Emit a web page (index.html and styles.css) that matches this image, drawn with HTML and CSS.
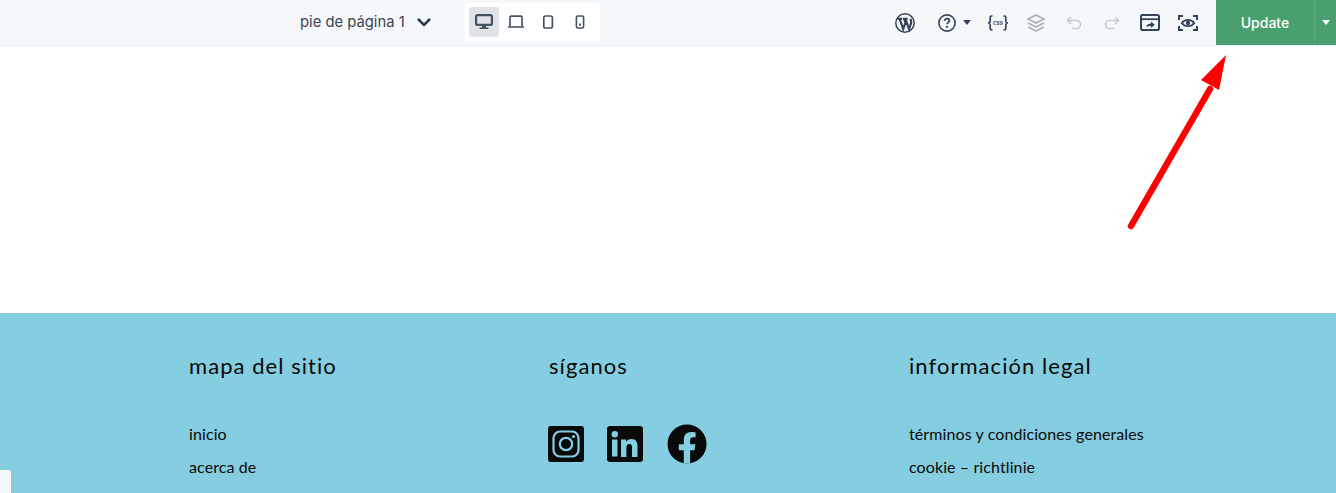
FILE: index.html
```html
<!DOCTYPE html>
<html lang="en">
<head>
    <meta charset="UTF-8">
    <meta name="viewport" content="width=device-width, initial-scale=1.0">
    <title>pie de página 1</title>
    <link rel="stylesheet" href="styles.css">
</head>
<body>

    <header class="topBar">
        <div class="pageName">
            <span>pie de página 1</span>
            <svg class="chevron" width="16" height="10" viewBox="0 0 16 10"><path d="M2 2 8 8l6-6" fill="none" stroke="#2f3d4d" stroke-width="2.600"/></svg>
        </div>

        <div class="devices">
            <button class="iconBtn device active">
                <svg width="18" height="16" viewBox="0 0 18 16"><rect x="1.100" y="1.100" width="15.800" height="9.800" rx="1.500" fill="none" stroke="#46535f" stroke-width="2.200"/><path d="M7 12h4v1.500h2.500V15h-9v-1.500H7z" fill="#46535f"/></svg>
            </button>
            <button class="iconBtn device">
                <svg width="18" height="14" viewBox="0 0 18 14"><path d="M3 11V2.200a1 1 0 0 1 1-1h10a1 1 0 0 1 1 1V11" fill="none" stroke="#46535f" stroke-width="1.700"/><path d="M1 11.200h16v1.600H1z" fill="#46535f"/></svg>
            </button>
            <button class="iconBtn device">
                <svg width="12" height="14" viewBox="0 0 12 14"><rect x="1.800" y="1" width="8.600" height="12" rx="1.800" fill="none" stroke="#46535f" stroke-width="1.700"/></svg>
            </button>
            <button class="iconBtn device">
                <svg width="10" height="14" viewBox="0 0 10 14"><rect x="1.400" y="1" width="7.200" height="12" rx="1.600" fill="none" stroke="#46535f" stroke-width="1.600"/><rect x="4" y="8.600" width="2" height="2" fill="#46535f"/></svg>
            </button>
        </div>

        <div class="tools">
            <button class="iconBtn">
                <svg width="20" height="20" viewBox="0 0 20 20"><circle cx="10" cy="10" r="9.200" fill="none" stroke="#33445a" stroke-width="1.500"/><path d="M2.800 5.800h4.400M4.700 6l3.500 10 2.300-6.300-1.300-3.700M8 5.800h4.600M10.500 6l3.500 10 2-5.700c.6-1.700.2-3-.7-4.300" fill="none" stroke="#33445a" stroke-width="2.200"/></svg>
            </button>
            <button class="iconBtn helpBtn">
                <svg width="18" height="18" viewBox="0 0 18 18"><circle cx="9" cy="9" r="8.100" fill="none" stroke="#33445a" stroke-width="1.600"/><path d="M6.600 7c0-1.500 1.100-2.300 2.400-2.300S11.400 5.500 11.400 6.800c0 1.700-2.400 1.800-2.400 3.500" fill="none" stroke="#33445a" stroke-width="1.700"/><circle cx="9" cy="12.900" r="1.100" fill="#33445a"/></svg>
                <span class="caret dark"></span>
            </button>
            <button class="iconBtn">
                <svg width="20" height="16" viewBox="0 0 20 16"><path d="M4.500 1H3.600C2.600 1 2.200 1.600 2.200 2.500v3.400C2.200 7 1.700 7.600.8 8c.9.400 1.400 1 1.400 2.100v3.400c0 .9.400 1.500 1.400 1.500h.9M15.500 1h.9c1 0 1.400.6 1.400 1.500v3.400c0 1.100.5 1.700 1.400 2.100-.9.400-1.400 1-1.400 2.100v3.400c0 .9-.4 1.500-1.400 1.500h-.9" fill="none" stroke="#33445a" stroke-width="1.700"/><text class="cssLabel" x="10" y="10">css</text></svg>
            </button>
            <button class="iconBtn">
                <svg width="18" height="18" viewBox="0 0 18 18" fill="none" stroke="#a9b2ba" stroke-width="1.600"><path d="M9 1 17 5 9 9 1 5z"/><path d="M1 9l8 4 8-4"/><path d="M1 13l8 4 8-4"/></svg>
            </button>
            <button class="iconBtn">
                <svg width="16" height="14" viewBox="0 0 16 14" fill="none" stroke="#c5cbd0" stroke-width="1.600"><path d="M5 1 1.500 4.500 5 8"/><path d="M2 4.500h8.500a4 4 0 0 1 0 8H6"/></svg>
            </button>
            <button class="iconBtn">
                <svg width="16" height="14" viewBox="0 0 16 14" fill="none" stroke="#c5cbd0" stroke-width="1.600"><path d="M11 1l3.500 3.500L11 8"/><path d="M14 4.500H5.500a4 4 0 0 0 0 8H10"/></svg>
            </button>
            <button class="iconBtn">
                <svg width="20" height="17" viewBox="0 0 20 17"><rect x="1" y="1" width="18" height="15" rx="1.800" fill="none" stroke="#33445a" stroke-width="2"/><path d="M1 5.200h18" stroke="#33445a" stroke-width="1.800"/><path d="M6.300 13.600c.1-2.600 1.800-4 4.700-4V7.600l3.800 3.200-3.800 3.100v-1.900c-2 0-3.400.4-4.700 1.600z" fill="#33445a"/></svg>
            </button>
            <button class="iconBtn">
                <svg width="20" height="16" viewBox="0 0 20 16" fill="none" stroke="#33445a" stroke-width="2"><path d="M1 5V1h4M15 1h4v4M19 11v4h-4M5 15H1v-4"/><path d="M3.800 8C6.500 3.800 13.500 3.800 16.200 8 13.500 12.200 6.500 12.200 3.800 8z" stroke-width="1.800"/><circle cx="10" cy="8" r="2.200" fill="#33445a" stroke="none"/></svg>
            </button>
        </div>

        <div class="updateBox">
            <button class="updateBtn">Update</button>
            <button class="updateMore"><span class="caret"></span></button>
        </div>
    </header>

    <main class="stage"></main>

    <footer class="siteFooter">
        <div class="footerCol">
            <h3>mapa del sitio</h3>
            <ul>
                <li>inicio</li>
                <li>acerca de</li>
            </ul>
        </div>
        <div class="footerCol">
            <h3>síganos</h3>
            <div class="socials">
                <svg width="36" height="36" viewBox="0 0 36 36"><rect width="36" height="36" rx="3" fill="#0a0a0a"/><rect x="5.500" y="5.500" width="25" height="25" rx="6.500" fill="none" stroke="#85cde0" stroke-width="2.200"/><circle cx="18" cy="18" r="6.200" fill="none" stroke="#85cde0" stroke-width="2.200"/><circle cx="25.500" cy="10.500" r="1.600" fill="#85cde0"/></svg>
                <svg width="36" height="36" viewBox="0 0 36 36"><rect width="36" height="36" rx="3" fill="#0a0a0a"/><rect x="5" y="13.500" width="5.500" height="17" fill="#85cde0"/><circle cx="7.800" cy="8.300" r="3.200" fill="#85cde0"/><path d="M14 13.500h5.200v2.400c1-1.800 2.900-2.800 5.200-2.800 5 0 6.100 3.200 6.100 7.500v10.400H25v-9.200c0-2.200-.4-3.900-2.600-3.900s-3 1.700-3 3.900v9.200H14z" fill="#85cde0"/></svg>
                <svg width="40" height="40" viewBox="0 0 40 40"><circle cx="20" cy="20" r="19.500" fill="#0a0a0a"/><path d="M16.800 39.500V26.200h-5v-6h5v-4.500c0-5 3-7.700 7.500-7.700 2.200 0 4.300.4 4.300.4v4.900h-2.400c-2.400 0-3.100 1.500-3.100 3v3.900h5.300l-.9 6h-4.400v13.300z" fill="#85cde0"/></svg>
            </div>
        </div>
        <div class="footerCol">
            <h3>información legal</h3>
            <ul>
                <li>términos y condiciones generales</li>
                <li>cookie – richtlinie</li>
            </ul>
        </div>
    </footer>

    <svg class="arrow" width="110" height="186" viewBox="0 0 110 186"><path d="M5 178 84 41" fill="none" stroke="#ff0000" stroke-width="6.500" stroke-linecap="round"/><path d="M100 7 93 42 75 32z" fill="#ff0000"/></svg>

    <div class="sideHandle"><span></span></div>

</body>
</html>
```

FILE: styles.css
```css
*{ box-sizing: border-box; }
html, body{ margin: 0; padding: 0; background-color: #fff; height: 493px; overflow: hidden; }
button{ border: 0; padding: 0; background: none; font: inherit; }

.topBar{
    display: flex;
    align-items: center;
    height: 46px;
    padding-left: 300px;
    background: #f5f8fa;
    border-bottom: 1px solid #e8ecef;
    font-family: "Inter", sans-serif;
}
.pageName{
    display: flex;
    align-items: center;
    width: 165px;
    gap: 11px;
    margin-top: -2px;
    font-size: 14.800px;
    color: #3a4654;
}

.devices{
    display: flex;
    gap: 2px;
    height: 38px;
    width: 135px;
    padding: 4px;
    margin-top: -1px;
    background: #fff;
    border-radius: 2px;
}
.iconBtn{
    display: flex;
    align-items: center;
    justify-content: center;
    width: 38px;
    height: 30px;
}
.iconBtn.device{ width: 30px; }
.iconBtn.active{ background: #dfe2e7; border-radius: 3px; }

.tools{
    display: flex;
    align-items: center;
    margin-left: 286px;
}
.helpBtn{
    width: 51px;
    margin-left: 4px;
    gap: 7px;
    justify-content: flex-start;
    padding-left: 10px;
}
.cssLabel{
    font-family: "Inter", sans-serif;
    font-size: 6px;
    font-weight: 600;
    fill: #33445a;
    text-anchor: middle;
}
.caret{
    display: block;
    width: 0;
    height: 0;
    border-left: 4.500px solid transparent;
    border-right: 4.500px solid transparent;
    border-top: 5px solid #fff;
}
.caret.dark{ border-top-color: #33445a; }

.updateBox{
    display: flex;
    height: 45px;
    margin-left: 9px;
    align-self: flex-start;
}
.updateBtn{
    width: 98px;
    padding-bottom: 1px;
    background: #4a9f6e;
    color: #fff;
    font-family: "Inter", sans-serif;
    font-size: 14px;
    font-weight: 500;
}
.updateMore{
    display: flex;
    align-items: center;
    justify-content: center;
    width: 22px;
    background: #4a9f6e;
    border-left: 1px solid #57a87a;
}

.stage{ height: 267px; background: #fff; }

.siteFooter{
    display: grid;
    grid-template-columns: repeat(3, 360px);
    height: 180px;
    padding: 40px 0 0 189px;
    background: #85cde0;
    color: #0a0a0a;
    font-family: "Lato", sans-serif;
}
.footerCol h3{
    margin: 0 0 45px;
    font-size: 22px;
    line-height: 26px;
    font-weight: 400;
    letter-spacing: 1.050px;
}
.footerCol ul{ list-style: none; margin: 0; padding: 0; }
.footerCol li{
    height: 33px;
    line-height: 20px;
    font-size: 16px;
    letter-spacing: .1px;
}
.socials{
    display: flex;
    align-items: center;
    gap: 23px;
    margin: 1px 0 0 -1px;
}
.socials svg:last-child{ margin-left: 1px; }

.arrow{
    position: absolute;
    left: 1126px;
    top: 48px;
}
.sideHandle{
    position: absolute;
    left: 0;
    top: 470px;
    width: 11px;
    height: 23px;
    background: #f5f8fa;
    border-top-right-radius: 3px;
}
```
